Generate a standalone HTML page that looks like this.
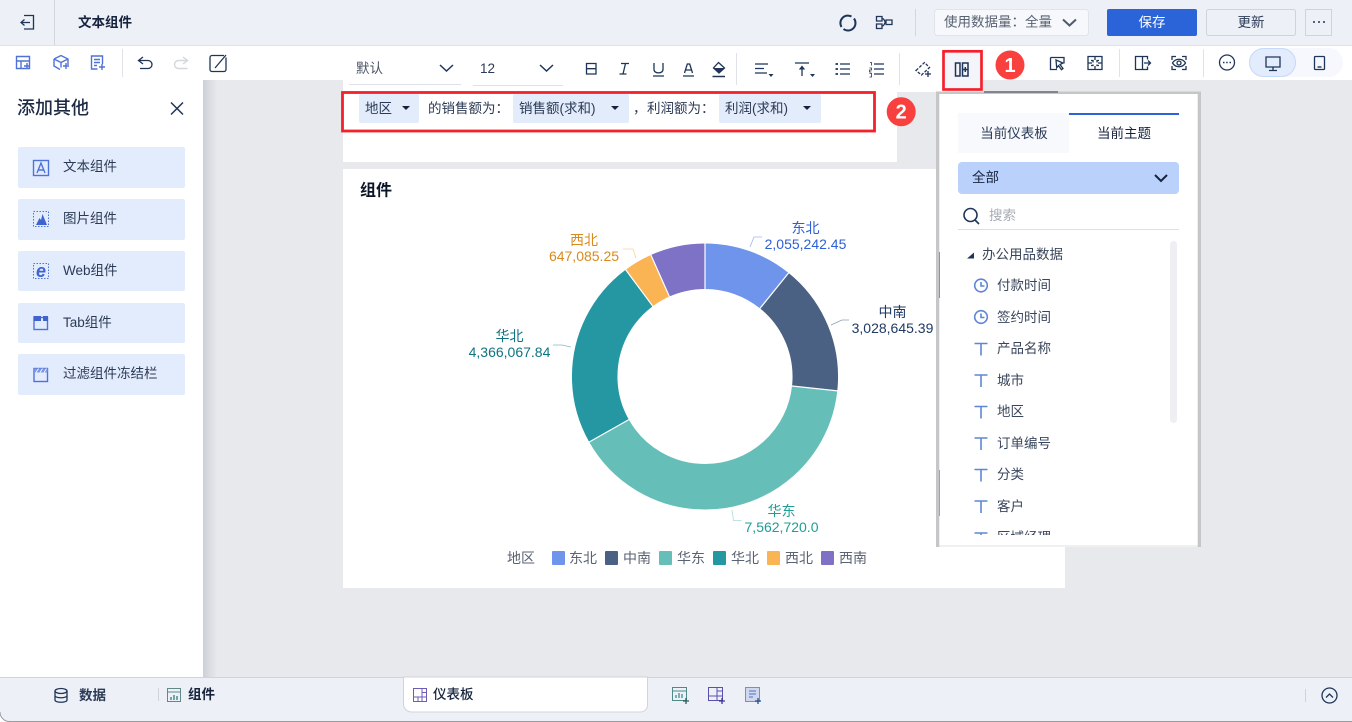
<!DOCTYPE html>
<html lang="zh"><head><meta charset="utf-8"><title>文本组件</title>
<style>
html,body{margin:0;padding:0;width:1352px;height:722px;overflow:hidden;background:#e8e9ed}
svg{display:block;position:absolute;left:0;top:0}
text{font-family:"Liberation Sans","Noto Sans CJK SC",sans-serif;font-size:13.5px;fill:#2b3a55;white-space:pre}
.b{font-weight:700;fill:#16233c}
.i{fill:none;stroke:#1f3558;stroke-width:1.3}
.bl{fill:none;stroke:#4f72d8;stroke-width:1.4}
.c{font-size:14px}
.tr{fill:none;stroke:#5f86d6;stroke-width:1.6}
.lg{font-size:14px;fill:#5a6373}
</style></head><body>
<svg width="1352" height="722" viewBox="0 0 1352 722" xmlns="http://www.w3.org/2000/svg">
<defs>
<linearGradient id="sh" x1="0" x2="1" y1="0" y2="0"><stop offset="0" stop-color="#cdd0d8"/><stop offset="1" stop-color="#e8e9ed"/></linearGradient>
<clipPath id="list"><rect x="940" y="235" width="258" height="300"/></clipPath>
</defs>
<!-- top bar -->
<rect x="0" y="0" width="1352" height="45" fill="#edf0f6"/>
<rect x="0" y="45" width="1352" height="1" fill="#dfe2e9"/>
<rect x="54" y="0" width="1" height="45" fill="#d3d6dd"/>
<path class="i" d="M24 15.500h9.500v13.500H24M21 22.500h9M24.500 19.500l-3.500 3 3.500 3"/>
<text x="78" y="27" class="b">文本组件</text>
<path d="M851.500 16.500A7.500 7.500 0 0 0 841.500 27M843.500 29A7.500 7.500 0 0 0 854 18.500" fill="none" stroke="#1f3558" stroke-width="2"/>
<path class="i" d="M876.500 16.500h5.500v4.500h-5.500zM876.500 24h5.500v4.500h-5.500zM886 20h6v4.500h-6zM882 18.500c3 0 2 3.700 4 3.700M882 26c3 0 2-3.800 4-3.800"/>
<rect x="915" y="9" width="1" height="27" fill="#d3d6dd"/>
<rect x="934.500" y="9.500" width="154" height="26" rx="3" fill="#f7f8fb" stroke="#e1e4ea"/>
<text x="944" y="26.500" style="fill:#5a6373">使用数据量：全量</text>
<path d="M1063 19.500l6.500 6 6.500-6" fill="none" stroke="#4d5a70" stroke-width="2"/>
<rect x="1107" y="9" width="90" height="27" rx="2" fill="#2b63d9"/>
<text x="1152" y="27" text-anchor="middle" style="fill:#fff">保存</text>
<rect x="1206.500" y="9.500" width="89" height="26" rx="2" fill="#edf0f6" stroke="#d0d3da"/>
<text x="1251" y="27" text-anchor="middle">更新</text>
<rect x="1305.500" y="9.500" width="26" height="26" fill="#edf0f6" stroke="#d0d3da"/>
<path d="M1313 22h2M1318 22h2M1323 22h2" stroke="#1f3558" stroke-width="1.500"/>
<!-- toolbar -->
<rect x="0" y="46" width="1352" height="34" fill="#fff"/>
<path class="bl" d="M16.500 56.500h13v12h-13zM16.500 61h13M21 61v7.500"/>
<path d="M24 66h6M27 63v6" stroke="#4f72d8" stroke-width="1.400"/>
<path class="bl" d="M54 59l7-3.500 7 3.500v6M54 59v7l6 3.500M54 59l7 3.500 7-3.500M61 62.500v5"/>
<path d="M63 66h6M66 63v6" stroke="#4f72d8" stroke-width="1.400"/>
<path class="bl" d="M102.500 64v-8h-11v13h6M94 59.500h6M94 62.500h6M94 65.500h3"/>
<path d="M99 67h6M102 64v6" stroke="#4f72d8" stroke-width="1.400"/>
<rect x="122" y="49" width="1" height="28" fill="#dfe2e9"/>
<path d="M143 57l-4.500 3.500 4.500 3.500M139 60.500h9a4 4 0 0 1 0 8h-8" class="i"/>
<path d="M183 57l4.500 3.500-4.500 3.500M187.500 60.500h-9a4 4 0 0 0 0 8h9" fill="none" stroke="#d4d7de" stroke-width="1.400"/>
<path class="i" d="M224 55.500h-12a2 2 0 0 0-2 2v12a2 2 0 0 0 2 2h12a2 2 0 0 0 2-2v-12"/>
<path d="M215 68l11-13" class="i"/>
<!-- right toolbar -->
<path class="i" d="M1050.500 57.500h13.500v6M1050.500 57.500v12h6.500M1056 60l7 3-3 1.500 3 4-1.500 1.200-3-4-1.800 2z"/>
<path class="i" d="M1088 56.500h14v13h-14zM1095 56.500v3.500M1095 66v3.500M1088 63h4M1098 63h4M1091 60.500h2v2M1097 62.500v-2h2M1091 65.500h2v-1M1097 64.500v1h2"/>
<rect x="1119" y="49" width="1" height="28" fill="#dfe2e9"/>
<path class="i" d="M1135.500 56.500h7v13h-7zM1142.500 56.500h5v3M1142.500 69.500h5v-3M1144 63h6M1148 60.500l2.500 2.500-2.500 2.500"/>
<path class="i" d="M1172 60v-3.500h4M1182 56.500h4V60M1172 66v3.500h4M1186 66v3.500h-4M1172.500 63c3-5 10-5 13 0-3 5-10 5-13 0z"/><circle class="i" cx="1179" cy="63" r="2"/>
<rect x="1203" y="49" width="1" height="28" fill="#dfe2e9"/>
<circle cx="1227" cy="62.500" r="7.500" class="i"/>
<path d="M1223 62.500h1.500M1226.200 62.500h1.500M1229.500 62.500h1.500" stroke="#1f3558" stroke-width="1.400"/>
<rect x="1249" y="48" width="94" height="29" rx="14.500" fill="#f6f8fd"/>
<rect x="1249.500" y="48.500" width="46" height="28" rx="14" fill="#e2ecfd" stroke="#c5d9f8"/>
<path class="i" d="M1266 57h14v10h-14zM1273 67v3M1269 70.500h8"/>
<rect x="1314.500" y="56.500" width="10" height="13" rx="1" class="i"/>
<path d="M1317.500 67h4" stroke="#1f3558" stroke-width="1.400"/>
<!-- canvas -->
<rect x="203" y="80" width="14" height="597" fill="url(#sh)"/>
<rect x="343" y="47" width="640" height="45" fill="#fff"/>
<rect x="343" y="92" width="554" height="70" fill="#fff"/>
<rect x="343" y="169" width="722" height="419" fill="#fff"/>
<!-- floating toolbar -->
<text x="356" y="73" style="fill:#4c5567">默认</text>
<path d="M440 65l6.500 6 6.500-6" fill="none" stroke="#1f3558" stroke-width="1.500"/>
<rect x="349" y="84" width="112" height="1" fill="#dfe2e9"/>
<text x="480" y="73">12</text>
<path d="M540 65l6.500 6 6.500-6" fill="none" stroke="#1f3558" stroke-width="1.500"/>
<rect x="473" y="85" width="90" height="1" fill="#dfe2e9"/>
<path class="i" d="M586.500 63.500h9.500v10.500h-9.500zM586.500 68.700h9.500"/>
<path class="i" d="M621 63.500h8M619.500 74h7M625.500 63.500l-2.500 10.500"/>
<path class="i" d="M654 63v6.500c0 4.500 9 4.500 9 0V63M653 76h11"/>
<path class="i" d="M684.500 73l2.800-9h2.400l2.800 9M685.500 70h6M683 76h11"/>
<path class="i" d="M718.500 62.500l6 5.500-5.500 5-5.500-5z"/>
<path d="M713.500 68h11l-5.500 5z" fill="#1f3558"/><path d="M712.500 76.500h12.500" stroke="#1f3558" stroke-width="1.500"/>
<rect x="736" y="53" width="1" height="32" fill="#dfe2e9"/>
<path class="i" d="M755 64h13M755 68.500h9M755 73h12"/><path d="M768.500 74h5l-2.500 3z" fill="#1f3558"/>
<path class="i" d="M795 63h14M802 76V68"/><path d="M802 65.500l-3.200 4h6.400z" fill="#1f3558"/><path d="M810 74h5l-2.500 3z" fill="#1f3558"/>
<path class="i" d="M840 64h10M840 69h10M840 74h10"/><path d="M835.500 64h2.500M835.500 69h2.500M835.500 74h2.500" stroke="#1f3558" stroke-width="1.800"/>
<path class="i" d="M874 64h10M874 69h10M874 74h10"/><path d="M870 62.500h1.500v3M869.500 68h2v2h-2v2h2M869.500 73.500h2v3.500h-2" stroke="#1f3558" stroke-width=".8" fill="none"/>
<rect x="899" y="53" width="1" height="32" fill="#dfe2e9"/>
<path class="i" d="M916 70.500l8.500-8 5 5-8 7.500z" stroke-dasharray="3 1.500"/><path d="M925 74h6M928 71v6" stroke="#1f3558" stroke-width="1.300"/>
<rect x="943.500" y="51.500" width="37" height="38" fill="#f3f5fa"/>
<path d="M955.500 63h4.500v13h-4.500zM962.500 63h5.500v13h-5.500zM963 69.500h4.500M965.300 67v5" fill="none" stroke="#1f3558" stroke-width="1.500"/>
<rect x="943.500" y="51.300" width="38" height="38.200" fill="none" stroke="#f4212c" stroke-width="2.700"/>
<circle cx="1010" cy="65" r="14.500" fill="#f8403f"/>
<text x="1010" y="72" text-anchor="middle" style="fill:#fff;font-size:20px;font-weight:700">1</text>
<!-- filter -->
<rect x="359" y="94" width="60" height="29" rx="2" fill="#e2ecfb"/>
<text x="365" y="113">地区</text>
<path d="M402 106h8l-4 4z" fill="#16233c"/>
<text x="428" y="113">的销售额为：</text>
<rect x="513" y="94" width="116" height="29" rx="2" fill="#e2ecfb"/>
<text x="519" y="113">销售额(求和)</text>
<path d="M611 106h8l-4 4z" fill="#16233c"/>
<text x="633" y="113">，</text>
<text x="647" y="113">利润额为：</text>
<rect x="719" y="94" width="102" height="29" rx="2" fill="#e2ecfb"/>
<text x="725" y="113">利润(求和)</text>
<path d="M803 106h8l-4 4z" fill="#16233c"/>
<rect x="342.500" y="92.500" width="532" height="38.500" fill="none" stroke="#f4212c" stroke-width="2.800"/>
<circle cx="901.200" cy="111.700" r="14.500" fill="#f8403f"/>
<text x="901.200" y="118.500" text-anchor="middle" style="fill:#fff;font-size:20px;font-weight:700">2</text>
<!-- chart -->
<text x="360" y="195.500" class="b" style="font-size:16px;fill:#0b1528">组件</text>
<g fill="none" stroke-width="45.500" transform="rotate(-90 705 376.500)">
<circle cx="705" cy="376.500" r="110.300" stroke="#6f94ec" pathLength="360" stroke-dasharray="38.900 360"/>
<circle cx="705" cy="376.500" r="110.300" stroke="#4b6184" pathLength="360" stroke-dasharray="57.300 360" stroke-dashoffset="-38.900"/>
<circle cx="705" cy="376.500" r="110.300" stroke="#65bfb8" pathLength="360" stroke-dasharray="144.300 360" stroke-dashoffset="-96.200"/>
<circle cx="705" cy="376.500" r="110.300" stroke="#2597a3" pathLength="360" stroke-dasharray="82.900 360" stroke-dashoffset="-240.500"/>
<circle cx="705" cy="376.500" r="110.300" stroke="#fbb454" pathLength="360" stroke-dasharray="12.600 360" stroke-dashoffset="-323.400"/>
<circle cx="705" cy="376.500" r="110.300" stroke="#7d72c6" pathLength="360" stroke-dasharray="24 360" stroke-dashoffset="-336"/>
</g>
<g stroke="#fff" stroke-width="1.200">
<line x1="705" y1="242" x2="705" y2="290"/>
<line x1="705" y1="242" x2="705" y2="290" transform="rotate(38.900 705 376.500)"/>
<line x1="705" y1="242" x2="705" y2="290" transform="rotate(96.200 705 376.500)"/>
<line x1="705" y1="242" x2="705" y2="290" transform="rotate(240.500 705 376.500)"/>
<line x1="705" y1="242" x2="705" y2="290" transform="rotate(323.400 705 376.500)"/>
<line x1="705" y1="242" x2="705" y2="290" transform="rotate(336 705 376.500)"/>
</g>
<g fill="none" stroke-width=".8">
<path d="M750 247l4-10h8" stroke="#9db5ef"/>
<path d="M831 325l11-5h7" stroke="#8f9db3"/>
<path d="M553 345h9l9 2" stroke="#7fbcc3"/>
<path d="M623 249h10l3 9" stroke="#fbd29a"/>
<path d="M732 510l1.500 10.500h8" stroke="#a9dcd7"/>
</g>
<g text-anchor="middle">
<text x="805.500" y="233" class="c" style="fill:#2e5fd6">东北</text>
<text x="805.500" y="249" class="c" style="fill:#2e5fd6">2,055,242.45</text>
<text x="892.500" y="317" class="c" style="fill:#1f3a63">中南</text>
<text x="892.500" y="333" class="c" style="fill:#1f3a63">3,028,645.39</text>
<text x="509.500" y="341" class="c" style="fill:#0f7480">华北</text>
<text x="509.500" y="357" class="c" style="fill:#0f7480">4,366,067.84</text>
<text x="584" y="245" class="c" style="fill:#d98a1c">西北</text>
<text x="584" y="261" class="c" style="fill:#d98a1c">647,085.25</text>
<text x="781.500" y="516" class="c" style="fill:#1f9e93">华东</text>
<text x="781.500" y="532" class="c" style="fill:#1f9e93">7,562,720.0</text>
</g>
<text x="507" y="563" class="lg">地区</text>
<rect x="552" y="551" width="13" height="14" rx="1" fill="#6f94ec"/><text x="569" y="563" class="lg">东北</text>
<rect x="605" y="551" width="13" height="14" rx="1" fill="#4b6184"/><text x="623" y="563" class="lg">中南</text>
<rect x="659" y="551" width="13" height="14" rx="1" fill="#65bfb8"/><text x="677" y="563" class="lg">华东</text>
<rect x="713" y="551" width="13" height="14" rx="1" fill="#2597a3"/><text x="731" y="563" class="lg">华北</text>
<rect x="767" y="551" width="13" height="14" rx="1" fill="#fbb454"/><text x="785" y="563" class="lg">西北</text>
<rect x="821" y="551" width="13" height="14" rx="1" fill="#7d72c6"/><text x="839" y="563" class="lg">西南</text>
<!-- left panel -->
<rect x="0" y="80" width="203" height="597" fill="#fff"/>
<text x="17" y="114" style="font-size:18px;fill:#1c2a44;font-weight:500">添加其他</text>
<path d="M171 102.500l12 12M183 102.500l-12 12" stroke="#1f3558" stroke-width="1.500"/>
<g fill="#e3ecfd">
<rect x="18" y="147" width="167" height="41" rx="2"/>
<rect x="18" y="199" width="167" height="41" rx="2"/>
<rect x="18" y="251" width="167" height="40" rx="2"/>
<rect x="18" y="303" width="167" height="40" rx="2"/>
<rect x="18" y="354" width="167" height="41" rx="2"/>
</g>
<text x="63" y="171">文本组件</text>
<text x="63" y="223">图片组件</text>
<text x="63" y="275">Web组件</text>
<text x="63" y="327">Tab组件</text>
<text x="63" y="378">过滤组件冻结栏</text>
<rect x="33.500" y="160.500" width="15" height="15" class="bl"/>
<path class="bl" d="M37 173l4-10 4 10M38.500 170h5"/>
<rect x="33.500" y="211.500" width="15" height="15" fill="none" stroke="#4f72d8" stroke-dasharray="1.500 1.500"/>
<path d="M36 225l3.500-7 1.500 2 1.500-6 4.500 11z" fill="#3f63cf"/>
<rect x="33.500" y="263.500" width="15" height="15" fill="none" stroke="#4f72d8" stroke-dasharray="1.500 1.500"/>
<text x="41" y="277" text-anchor="middle" style="font-size:18px;font-weight:700;fill:#3f63cf;font-style:italic">e</text>
<rect x="34" y="317.500" width="13.500" height="12" class="bl"/>
<path d="M33.500 316h7.500v5h-7.500zM43 316h5v5h-5z" fill="#3f63cf"/>
<rect x="34" y="368.500" width="13.500" height="13" class="bl"/>
<rect x="34" y="368.500" width="13.500" height="4" fill="#7d97e6"/>
<path d="M36 372.500l2.500-4M40 372.500l2.500-4M44 372.500l2.500-4" stroke="#fff" stroke-width=".8"/>
<!-- right panel -->
<rect x="939" y="94" width="259" height="451" fill="#fff"/>
<rect x="939" y="545" width="259" height="2" fill="#f0f0f3"/>
<rect x="936" y="91.500" width="3.300" height="455.500" fill="#c5c6c8"/>
<rect x="1197.700" y="91.500" width="3.300" height="455.500" fill="#c5c6c8"/>
<rect x="936" y="91.500" width="265" height="2.500" fill="#c5c6c8"/>
<rect x="984" y="91" width="74" height="2" fill="#80858f"/>
<rect x="939" y="252" width="1" height="46" fill="#6f94ec"/>
<rect x="939" y="470" width="1" height="46" fill="#65bfb8"/>
<rect x="958" y="113" width="111" height="40" fill="#f7f9fd"/>
<rect x="1069" y="113" width="110" height="2" fill="#2b63d9"/>
<text x="1014" y="138" text-anchor="middle">当前仪表板</text>
<text x="1124" y="138" text-anchor="middle" style="fill:#16233c">当前主题</text>
<rect x="958" y="162" width="221" height="32" rx="4" fill="#b9d1fb"/>
<text x="972" y="182" style="fill:#16233c">全部</text>
<path d="M1155 175l6 6 6-6" fill="none" stroke="#16233c" stroke-width="2"/>
<circle cx="970.500" cy="215" r="6.500" fill="none" stroke="#1f3558" stroke-width="1.600"/>
<path d="M975 220l4 4" stroke="#1f3558" stroke-width="1.600"/>
<text x="989" y="220" style="fill:#a6abb5">搜索</text>
<rect x="958" y="229" width="221" height="1" fill="#dcdfe5"/>
<path d="M967 258.500l7-6v6z" fill="#1f3558"/>
<text x="982" y="259" style="fill:#3a465c">办公用品数据</text>
<rect x="1170" y="241" width="7" height="182" rx="3.500" fill="#eeeff3"/>
<g clip-path="url(#list)">
<g fill="none" stroke="#5f86d6" stroke-width="1.600">
<circle cx="981" cy="285.500" r="6.300"/><path d="M981 282v4h3.500"/>
<circle cx="981" cy="317" r="6.300"/><path d="M981 313.500v4h3.500"/>
</g>
<path class="tr" d="M974.500 343.500h13M981 343.500v12M974.500 375h13M981 375v12M974.500 406.500h13M981 406.500v12M974.500 438h13M981 438v12M974.500 469.500h13M981 469.500v12M974.500 501h13M981 501v12M974.500 533h13M981 533v12"/>
<text x="997" y="290" style="fill:#3a465c">付款时间</text>
<text x="997" y="322" style="fill:#3a465c">签约时间</text>
<text x="997" y="353" style="fill:#3a465c">产品名称</text>
<text x="997" y="385" style="fill:#3a465c">城市</text>
<text x="997" y="416" style="fill:#3a465c">地区</text>
<text x="997" y="448" style="fill:#3a465c">订单编号</text>
<text x="997" y="479" style="fill:#3a465c">分类</text>
<text x="997" y="511" style="fill:#3a465c">客户</text>
<text x="997" y="542" style="fill:#3a465c">区域经理</text>
</g>
<!-- bottom bar -->
<rect x="0" y="708" width="14" height="14" fill="#fff"/>
<path d="M0 677h1352v45H10a10 10 0 0 1-10-10z" fill="#edf0f7"/>
<rect x="0" y="677" width="1352" height="1" fill="#d0d3dc"/>
<path d="M0 712a9.500 9.500 0 0 0 9.500 9.500H1352" fill="none" stroke="#9a9ca1"/>
<ellipse cx="61" cy="691" rx="6" ry="2.500" class="i"/>
<path class="i" d="M55 691v9c0 3 12 3 12 0v-9M55 695.500c0 3 12 3 12 0"/>
<text x="79" y="700" class="b" style="fill:#2b3a55">数据</text>
<rect x="158" y="688" width="1" height="13" fill="#d0d3dc"/>
<rect x="167.500" y="688.500" width="13" height="13" fill="none" stroke="#5f8a87"/>
<path d="M167.500 692h13" stroke="#5f8a87"/>
<path d="M171 700v-3M174 700v-5M177 700v-4" stroke="#3f8f8f" stroke-width="1.500"/>
<text x="188" y="699" class="b" style="fill:#16233c">组件</text>
<path d="M403.500 677v27a8 8 0 0 0 8 8h229a7 7 0 0 0 7-7v-28z" fill="#fff" stroke="#d0d3dc"/>
<rect x="413.500" y="688.500" width="13" height="13" fill="none" stroke="#6a5fb8"/>
<path d="M413.500 697h13M422 688.500v13M418 697v4.500M422 692.500h4.500" stroke="#6a5fb8" fill="none"/>
<text x="433" y="699" class="b" style="fill:#16233c;font-weight:500">仪表板</text>
<path d="M672.500 687.500h14v13h-14zM672.500 691h14" fill="none" stroke="#4f8a87"/>
<path d="M676 698v-3M679 698v-5M682 698v-4" stroke="#3f8f8f" stroke-width="1.300"/>
<path d="M683 701h6M686 698v6" stroke="#2d5f5c" stroke-width="1.300"/>
<path d="M708.500 687.500h14v13h-14zM708.500 696h14M717 687.500v13M717 691h5.500" fill="none" stroke="#5a50b0"/>
<path d="M719 701h6M722 698v6" stroke="#3f3690" stroke-width="1.300"/>
<rect x="745.500" y="687.500" width="14" height="14" fill="#cfd8ec" stroke="#7b8fb8"/>
<path d="M749 691h7M749 694h7M749 697h4" stroke="#4f72c8"/>
<path d="M755 701h6M758 698v6" stroke="#2d4f90" stroke-width="1.300"/>
<rect x="1305" y="689" width="1" height="13" fill="#d0d3dc"/>
<circle cx="1329.500" cy="695.500" r="7.500" class="i"/>
<path class="i" d="M1326 697.500l3.500-3.500 3.500 3.500"/>
</svg>
</body></html>
